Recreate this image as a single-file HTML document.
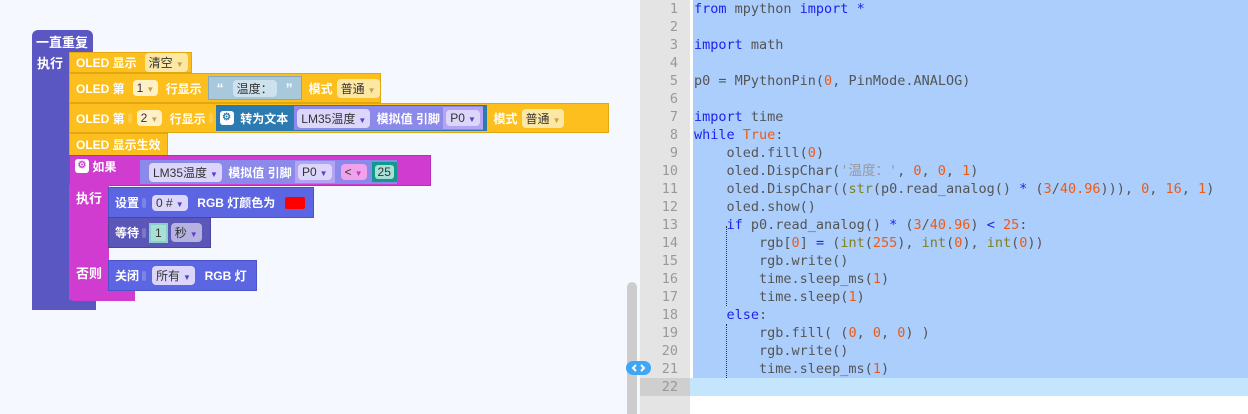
<!DOCTYPE html>
<html><head><meta charset="utf-8"><style>
*{margin:0;padding:0;box-sizing:border-box}
body{width:1248px;height:414px;overflow:hidden;background:#f5f8ff;position:relative;font-family:"Liberation Sans","Noto Sans CJK SC",sans-serif}
.a{position:absolute}
.blk{position:absolute;display:flex;align-items:center;color:#fff;font-size:12px;font-weight:bold;white-space:nowrap;padding-left:6px;overflow:hidden}
.y{background:#fdbf1d;border:1px solid #e0a710}
.dd{background:#fde7a4;color:#333;font-weight:normal;border-radius:4px;padding:1px 4px;margin:0 4px;font-size:12px}
.dd i{font-style:normal;color:#caa24a;font-size:8px;margin-left:3px}
.pd{background:#ddd6fb;color:#333;font-weight:normal;border-radius:4px;padding:1px 4px;margin:0 3px;font-size:12px}
.pd i{font-style:normal;color:#5a40d0;font-size:8px;margin-left:3px}
.sk{display:inline-block;width:4px;height:10px;background:#fff3;border-radius:2px;margin:0 3px}
.code{position:absolute;left:694px;top:0;font-family:"DejaVu Sans Mono","Liberation Mono",monospace;font-size:13.5px;line-height:18px;color:#555;white-space:pre}
.ln{position:absolute;left:640px;width:38px;text-align:right;font-family:"DejaVu Sans Mono",monospace;font-size:13.5px;line-height:18px;color:#999;top:0;white-space:pre}
.k{color:#2020f0}.n{color:#f05a10}.b{color:#808020}.s{color:#999}
</style></head><body>
<div class="a" style="left:640px;top:0;width:50px;height:414px;background:#e4e4e4"></div>
<div class="a" style="left:690px;top:0;width:558px;height:414px;background:#fff"></div>
<div class="a" style="left:693px;top:0;width:555px;height:378px;background:#abcefd"></div>
<div class="a" style="left:640px;top:378px;width:50px;height:18px;background:#cfcfcf"></div>
<div class="a" style="left:690px;top:378px;width:558px;height:18px;background:#c4e6fc"></div>
<div class="a" style="left:627px;top:282px;width:10px;height:132px;background:#cdcdcd;border-radius:5px 5px 0 0"></div>
<div class="a" style="left:626px;top:361px;width:25px;height:14px;background:#3ea6f5;border-radius:7px"><svg width="25" height="14"><path d="M10 4 L7 7 L10 10 M15 4 L18 7 L15 10" stroke="#fff" stroke-width="2" fill="none"/></svg></div>
<div class="a" style="left:726px;top:226px;height:80px;border-left:1px dotted #333"></div>
<div class="a" style="left:726px;top:324px;height:54px;border-left:1px dotted #333"></div>
<div class="ln">1
2
3
4
5
6
7
8
9
10
11
12
13
14
15
16
17
18
19
20
21
22</div>
<div class="code"><span class="k">from</span> mpython <span class="k">import</span> <span class="k">*</span>

<span class="k">import</span> math

p0 = MPythonPin(<span class="n">0</span>, PinMode.ANALOG)

<span class="k">import</span> time
<span class="k">while</span> <span class="n">True</span>:
    oled.fill(<span class="n">0</span>)
    oled.DispChar(<span class="s">'温度：'</span>, <span class="n">0</span>, <span class="n">0</span>, <span class="n">1</span>)
    oled.DispChar((<span class="b">str</span>(p0.read_analog() <span class="k">*</span> (<span class="n">3</span>/<span class="n">40.96</span>))), <span class="n">0</span>, <span class="n">16</span>, <span class="n">1</span>)
    oled.show()
    <span class="k">if</span> p0.read_analog() <span class="k">*</span> (<span class="n">3</span>/<span class="n">40.96</span>) <span class="k">&lt;</span> <span class="n">25</span>:
        rgb[<span class="n">0</span>] <span class="k">=</span> (<span class="b">int</span>(<span class="n">255</span>), <span class="b">int</span>(<span class="n">0</span>), <span class="b">int</span>(<span class="n">0</span>))
        rgb.write()
        time.sleep_ms(<span class="n">1</span>)
        time.sleep(<span class="n">1</span>)
    <span class="k">else</span>:
        rgb.fill( (<span class="n">0</span>, <span class="n">0</span>, <span class="n">0</span>) )
        rgb.write()
        time.sleep_ms(<span class="n">1</span>)
</div>

<div class="a" style="left:32px;top:30px;width:61px;height:22px;background:#5b57c2;border-radius:6px 6px 0 0"></div>
<div class="a" style="left:32px;top:50px;width:38px;height:260px;background:#5b57c2;border-radius:0 0 0 6px"></div>
<div class="a" style="left:32px;top:296px;width:64px;height:14px;background:#5b57c2"></div>
<div class="a" style="left:36px;top:32px;color:#fff;font-size:13px;font-weight:bold">一直重复</div>
<div class="a" style="left:37px;top:53px;color:#fff;font-size:13px;font-weight:bold">执行</div>

<div class="blk y" style="left:69px;top:52px;width:123px;height:21px">OLED 显示 <span class="dd" style="margin-left:8px">清空<i>▼</i></span></div>
<div class="blk y" style="left:69px;top:73px;width:312px;height:30px">OLED 第 <span class="sk"></span><span class="dd" style="background:#fff0c8;margin-left:2px">1<i>▼</i></span>
 &nbsp;行显示 <span class="sk"></span>
 <span style="background:#a8c9dc;border:1px solid #85a8c0;height:24px;display:flex;align-items:center;padding:0 8px;margin-right:7px;font-size:14px">“<span style="background:#cde2ec;color:#333;font-weight:normal;border-radius:4px;padding:0 4px;margin:0 9px;font-size:12px">温度：</span>”</span>模式 <span class="dd">普通<i>▼</i></span></div>
<div class="blk y" style="left:69px;top:103px;width:540px;height:30px">OLED 第 <span class="sk"></span><span class="dd" style="background:#fff0c8;margin-left:2px">2<i>▼</i></span>
 &nbsp;行显示 <span class="sk"></span>
 <span style="background:#2b7bb0;height:26px;display:flex;align-items:center;padding:0 4px"><span style="background:#fff;color:#2b7bb0;border-radius:3px;width:14px;height:14px;font-size:10px;text-align:center;line-height:14px">⚙</span>&nbsp;&nbsp;转为文本
 <span style="background:#8b89ea;height:24px;display:flex;align-items:center;margin-left:6px;padding-right:0"><span class="pd">LM35温度<i>▼</i></span>&nbsp;模拟值 引脚&nbsp;<span style="background:#b5a4f3;height:22px;display:flex;align-items:center"><span class="pd">P0<i>▼</i></span></span></span></span>
 &nbsp;&nbsp;模式 <span class="dd">普通<i>▼</i></span></div>
<div class="blk y" style="left:69px;top:133px;width:99px;height:23px">OLED 显示生效</div>

<div class="a" style="left:69px;top:155px;width:362px;height:31px;background:#d03ccf;border:1px solid #b72fb8"></div>
<div class="a" style="left:69px;top:185px;width:40px;height:115px;background:#d03ccf"></div>
<div class="a" style="left:69px;top:287px;width:66px;height:14px;background:#d03ccf;border-radius:0 0 0 5px"></div>
<div class="blk" style="left:69px;top:157px;height:18px;padding-left:6px"><span style="background:#fff;color:#d03ccf;border-radius:3px;width:14px;height:14px;font-size:10px;text-align:center;line-height:14px">⚙</span>&nbsp;如果</div>
<div class="blk" style="left:140px;top:160px;height:24px;background:#8b89ea;padding-left:6px;padding-right:0"><span class="pd">LM35温度<i>▼</i></span>&nbsp;模拟值 引脚&nbsp;<span style="background:#b5a4f3;height:22px;display:flex;align-items:center"><span class="pd">P0<i>▼</i></span></span><span class="pd" style="background:#f0a2ea;margin-left:6px">&lt;<i style="color:#c03cc0">▼</i></span><span style="background:#0f9a8c;height:20px;display:flex;align-items:center;padding:0 3px;margin-left:2px"><span style="background:#a8e0d8;color:#333;font-weight:normal;padding:0 3px;border-radius:3px">25</span></span></div>
<div class="a" style="left:76px;top:188px;color:#fff;font-size:13px;font-weight:bold">执行</div>
<div class="a" style="left:76px;top:263px;color:#fff;font-size:13px;font-weight:bold">否则</div>

<div class="blk" style="left:108px;top:187px;width:206px;height:31px;background:#5c66e3;border:1px solid #4a53c8">设置 <span class="sk"></span><span class="pd">0 #<i>▼</i></span>&nbsp;&nbsp;RGB 灯颜色为&nbsp;&nbsp;&nbsp;<span style="background:#f00;width:20px;height:12px;border-radius:2px"></span></div>
<div class="blk" style="left:108px;top:217px;width:103px;height:31px;background:#5b57b8;border:1px solid #4a46a0">等待 <span class="sk"></span><span style="background:#a8e0d8;color:#333;font-weight:normal;padding:1px 4px;border:2px solid #8ad0c8">1</span><span class="pd" style="background:#b5b2e0">秒<i>▼</i></span></div>
<div class="blk" style="left:108px;top:260px;width:149px;height:31px;background:#5c66e3;border:1px solid #4a53c8">关闭 <span class="sk"></span><span class="pd">所有<i>▼</i></span>&nbsp;&nbsp;RGB 灯</div>
</body></html>
